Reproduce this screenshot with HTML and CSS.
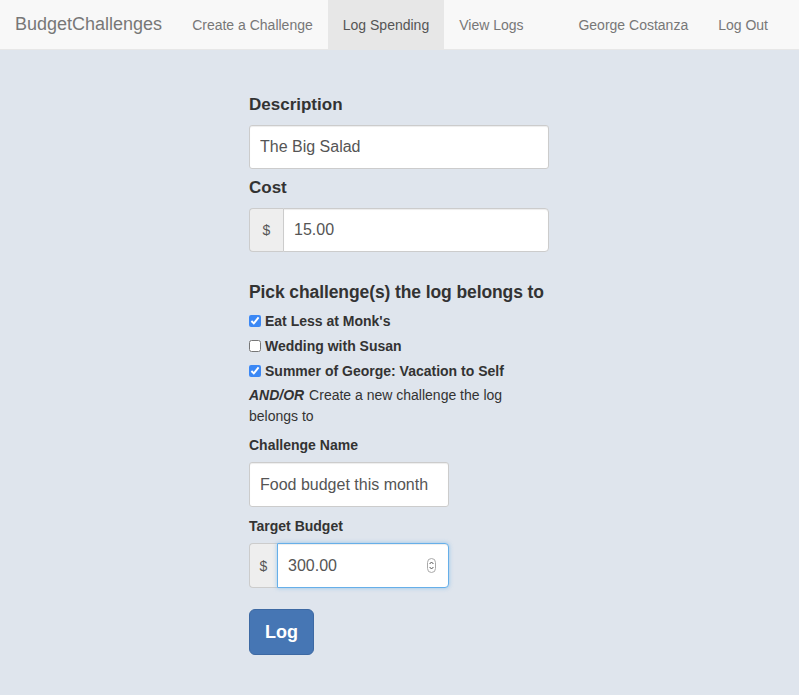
FILE: index.html
```html
<!DOCTYPE html>
<html>
<head>
<meta charset="utf-8">
<title>BudgetChallenges</title>
<link rel="stylesheet" href="styles.css">
</head>
<body>
<nav class="navbar">
  <a class="brand" href="#">BudgetChallenges</a>
  <ul class="nav">
    <li><a href="#">Create a Challenge</a></li>
    <li class="active"><a href="#">Log Spending</a></li>
    <li><a href="#">View Logs</a></li>
  </ul>
  <ul class="nav nav-right">
    <li><a href="#">George Costanza</a></li>
    <li><a href="#">Log Out</a></li>
  </ul>
</nav>
<main class="main">
  <form class="log-form">
    <label class="big-label">Description</label>
    <input class="field field-wide" type="text" value="The Big Salad">

    <label class="big-label label-cost">Cost</label>
    <div class="input-group group-wide">
      <span class="addon addon-lg">$</span>
      <input class="field group-field" type="text" value="15.00">
    </div>

    <h3 class="pick-title">Pick challenge(s) the log belongs to</h3>
    <div class="checks">
      <label class="check"><input type="checkbox" checked> Eat Less at Monk's</label>
      <label class="check"><input type="checkbox"> Wedding with Susan</label>
      <label class="check"><input type="checkbox" checked> Summer of George: Vacation to Self</label>
    </div>
    <p class="andor"><b class="andor-em">AND/OR</b> Create a new challenge the log belongs to</p>

    <label class="small-label">Challenge Name</label>
    <input class="field field-narrow" type="text" value="Food budget this month">

    <label class="small-label label-target">Target Budget</label>
    <div class="input-group group-narrow">
      <span class="addon addon-sm">$</span>
      <span class="focus-wrap">
        <input class="field group-field focused" type="text" value="300.00">
        <span class="spinner"><svg width="9" height="15" viewBox="0 0 9 15"><rect x="0.5" y="0.5" width="8" height="14" rx="4" fill="#fff" stroke="#a9a9a9"/><path d="M2.6 6 L4.5 4 L6.4 6" fill="none" stroke="#555" stroke-width="1"/><path d="M2.6 9 L4.5 11 L6.4 9" fill="none" stroke="#555" stroke-width="1"/></svg></span>
      </span>
    </div>

    <button class="btn" type="button">Log</button>
  </form>
</main>
</body>
</html>
```

FILE: styles.css
```css
* { box-sizing: border-box; }
html, body { margin: 0; padding: 0; }
body {
  background: #dfe5ed;
  font-family: "Liberation Sans", Arial, Helvetica, sans-serif;
  font-size: 14px;
  line-height: 20px;
  color: #333;
  height: 695px;
  overflow: hidden;
}
a { text-decoration: none; }

.navbar {
  display: flex;
  align-items: stretch;
  height: 50px;
  background: #f8f8f8;
  border-bottom: 1px solid #e7e7e7;
  padding: 0 16px 0 0;
}
.brand {
  display: block;
  padding: 14px 15px 15px 15px;
  font-size: 18px;
  line-height: 20px;
  color: #777;
}
.nav {
  list-style: none;
  margin: 0;
  padding: 0;
  display: flex;
}
.nav li a {
  display: block;
  padding: 15px 15px 14px;
  line-height: 20px;
  color: #777;
  font-size: 14px;
}
.nav li.active a {
  background: #e7e7e7;
  color: #555;
}
.nav-right { margin-left: auto; }

.main {
  width: 300px;
  margin: 0 auto;
  padding-top: 45px;
  position: relative;
  left: -0.5px;
}
.log-form { display: flex; flex-direction: column; align-items: flex-start; }

.big-label {
  display: block;
  font-size: 17px;
  font-weight: bold;
  line-height: 20px;
  margin-bottom: 10px;
}
.label-cost { margin-top: 9px; }

.field {
  display: block;
  height: 44px;
  padding: 0 10px;
  font-family: "Liberation Sans", Arial, sans-serif;
  font-size: 16px;
  color: #555;
  background: #fff;
  border: 1px solid #ccc;
  border-radius: 3px;
  box-shadow: inset 0 1px 1px rgba(0,0,0,0.075);
  outline: none;
}
.field-wide { width: 300px; }
.field-narrow { width: 200px; height: 45px; }

.input-group { display: flex; }
.group-wide { width: 300px; height: 44px; }
.group-narrow { width: 200px; height: 45px; }
.addon {
  display: flex;
  align-items: center;
  justify-content: center;
  flex: none;
  background: #eee;
  border: 1px solid #ccc;
  border-right: none;
  border-radius: 4px 0 0 4px;
  color: #555;
  font-size: 14px;
}
.addon-lg { width: 34px; }
.addon-sm { width: 28px; }
.group-field {
  flex: 1;
  width: 100%;
  height: 100%;
  min-width: 0;
  border-radius: 0 4px 4px 0;
}
.focus-wrap {
  position: relative;
  flex: 1;
  min-width: 0;
  display: flex;
}
.focused {
  border-color: #66afe9;
  box-shadow: inset 0 1px 1px rgba(0,0,0,0.075), 0 0 4px rgba(102,175,233,0.6);
}
.spinner {
  position: absolute;
  right: 13px;
  top: 15px;
  line-height: 0;
}

.pick-title {
  margin: 30px 0 0;
  font-size: 17.5px;
  font-weight: bold;
  line-height: 20px;
  letter-spacing: -0.1px;
}
.checks {
  margin-top: 9px;
  display: flex;
  flex-direction: column;
  gap: 5px;
}
.check {
  display: flex;
  align-items: center;
  gap: 3px;
  height: 20px;
  font-weight: bold;
}
.check input {
  margin: 0 1px 0 0;
  width: 12px;
  height: 12px;
  accent-color: #3b88f5;
}
.andor {
  margin: 4px 0 0;
  line-height: 21px;
}
.andor-em {
  font-style: italic;
  padding-right: 1px;
}
.small-label {
  display: block;
  font-weight: bold;
  margin-top: 8px;
  margin-bottom: 7px;
}
.label-target { margin-top: 9px; }

.btn {
  margin-top: 21px;
  width: 65px;
  height: 46px;
  background: #4676b4;
  border: 1px solid #3d69a3;
  border-radius: 6px;
  color: #fff;
  font-family: "Liberation Sans", Arial, sans-serif;
  font-size: 18px;
  font-weight: bold;
  padding: 0;
}
```
